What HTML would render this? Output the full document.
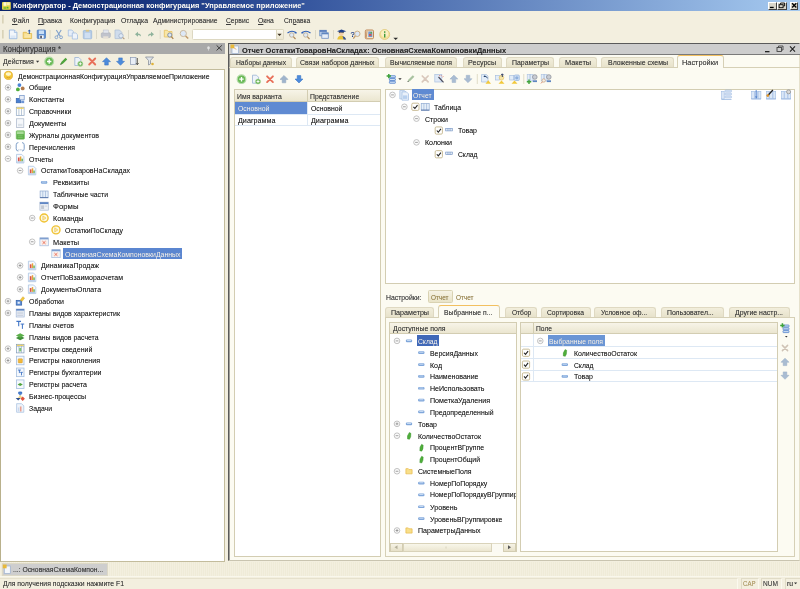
<!DOCTYPE html><html><head><meta charset="utf-8"><title>Конфигуратор</title>
<style>
*{margin:0;padding:0;box-sizing:border-box}
html,body{width:800px;height:589px;overflow:hidden;background:#f3efdf;font-family:"Liberation Sans",sans-serif;font-size:8px;color:#1c1c1c}
.a{position:absolute}
.t{position:absolute;white-space:nowrap;line-height:10px;height:10px;transform-origin:0 50%;text-shadow:0 0 .5px rgba(40,40,40,.45)}
#title{left:0;top:0;width:800px;height:11px;background:linear-gradient(90deg,#0a246a 0%,#14307a 15%,#30509a 35%,#a6caf0 100%)}
svg{position:absolute;left:0;top:0}
#root{position:absolute;left:0;top:0;width:800px;height:589px;will-change:transform}
</style></head><body><div id="root">
<div class="a" id="title"></div>
<div class="t " style="left: 13.1px; top: 1.4px; color: rgb(255, 255, 255); font-weight: bold; font-size: 7.8px; transform: scaleX(0.954);">Конфигуратор - Демонстрационная конфигурация "Управляемое приложение"</div>
<div class="a" style="left:768.1px;top:1.5px;width:9px;height:8px;background:#d9d5c9;border:1px solid;border-color:#fff #404040 #404040 #fff"></div>
<div class="a" style="left:777.1px;top:1.5px;width:10px;height:8px;background:#d9d5c9;border:1px solid;border-color:#fff #404040 #404040 #fff"></div>
<div class="a" style="left:789.9px;top:1.5px;width:8.6px;height:8px;background:#d9d5c9;border:1px solid;border-color:#fff #404040 #404040 #fff"></div>
<div class="t " style="left: 11.5px; top: 15.5px; color: rgb(58, 58, 58); transform: scaleX(0.889);"><u>Ф</u>айл</div>
<div class="t " style="left: 38px; top: 15.5px; color: rgb(58, 58, 58); transform: scaleX(0.888);"><u>П</u>равка</div>
<div class="t " style="left: 69.5px; top: 15.5px; color: rgb(58, 58, 58); transform: scaleX(0.847);">Конфигурация</div>
<div class="t " style="left: 120.7px; top: 15.5px; color: rgb(58, 58, 58); transform: scaleX(0.854);">Отладка</div>
<div class="t " style="left: 153px; top: 15.5px; color: rgb(58, 58, 58); transform: scaleX(0.845);">Администрирование</div>
<div class="t " style="left: 225.7px; top: 15.5px; color: rgb(58, 58, 58); transform: scaleX(0.839);"><u>С</u>ервис</div>
<div class="t " style="left: 258px; top: 15.5px; color: rgb(58, 58, 58); transform: scaleX(0.844);"><u>О</u>кна</div>
<div class="t " style="left: 283.7px; top: 15.5px; color: rgb(58, 58, 58); transform: scaleX(0.838);">Сп<u>р</u>авка</div>
<div class="a" style="left:191.5px;top:29px;width:92.5px;height:10.8px;background:#fff;border:1px solid #ddd8c2;border-radius:1.500px"></div>
<div class="a" style="left:275.5px;top:29px;width:8.5px;height:10.8px;background:linear-gradient(#faf8ee,#ebe6d0);border:1px solid #ddd8c2;border-radius:0 1.500px 1.500px 0"></div>
<div class="a" style="left:0px;top:43px;width:225px;height:10.9px;background:#a9a9a9"></div>
<div class="t " style="left: 3px; top: 44.5px; color: rgb(60, 60, 60); font-size: 8.2px; transform: scaleX(0.96);">Конфигурация *</div>
<div class="t " style="left: 3px; top: 57.4px; color: rgb(58, 58, 58); transform: scaleX(0.876);">Действия</div>
<div class="a" style="left:0px;top:69px;width:225px;height:492.5px;background:#fff;border:1px solid #c3bc9c;border-left:1.300px solid #b9b18c"></div>
<div class="t " style="left: 17.5px; top: 71.5px; transform: scaleX(0.861);">ДемонстрационнаяКонфигурацияУправляемоеПриложение</div>
<div class="t " style="left: 29px; top: 83.37px; transform: scaleX(0.855);">Общие</div>
<div class="t " style="left: 29px; top: 95.24px; transform: scaleX(0.901);">Константы</div>
<div class="t " style="left: 29px; top: 107.11px; transform: scaleX(0.877);">Справочники</div>
<div class="t " style="left: 29px; top: 118.98px; transform: scaleX(0.909);">Документы</div>
<div class="t " style="left: 29px; top: 130.85px; transform: scaleX(0.87);">Журналы документов</div>
<div class="t " style="left: 29px; top: 142.72px; transform: scaleX(0.855);">Перечисления</div>
<div class="t " style="left: 29px; top: 154.59px; transform: scaleX(0.868);">Отчеты</div>
<div class="t " style="left: 40.9px; top: 166.46px; transform: scaleX(0.873);">ОстаткиТоваровНаСкладах</div>
<div class="t " style="left: 52.9px; top: 178.33px; transform: scaleX(0.918);">Реквизиты</div>
<div class="t " style="left: 52.9px; top: 190.2px; transform: scaleX(0.858);">Табличные части</div>
<div class="t " style="left: 52.9px; top: 202.07px; transform: scaleX(0.972);">Формы</div>
<div class="t " style="left: 52.9px; top: 213.94px; transform: scaleX(0.9);">Команды</div>
<div class="t " style="left: 64.7px; top: 225.81px; transform: scaleX(0.865);">ОстаткиПоСкладу</div>
<div class="t " style="left: 52.9px; top: 237.68px; transform: scaleX(0.916);">Макеты</div>
<div class="a" style="left:63.2px;top:248.14999999999998px;width:119.0px;height:11px;background:#5b86d0"></div>
<div class="t " style="left: 64.7px; top: 249.55px; color: rgb(255, 255, 255); transform: scaleX(0.865);">ОсновнаяСхемаКомпоновкиДанных</div>
<div class="t " style="left: 40.9px; top: 261.42px; transform: scaleX(0.882);">ДинамикаПродаж</div>
<div class="t " style="left: 40.9px; top: 273.29px; transform: scaleX(0.866);">ОтчетПоВзаиморасчетам</div>
<div class="t " style="left: 40.9px; top: 285.16px; transform: scaleX(0.873);">ДокументыОплата</div>
<div class="t " style="left: 29px; top: 297.03px; transform: scaleX(0.871);">Обработки</div>
<div class="t " style="left: 29px; top: 308.9px; transform: scaleX(0.867);">Планы видов характеристик</div>
<div class="t " style="left: 29px; top: 320.77px; transform: scaleX(0.869);">Планы счетов</div>
<div class="t " style="left: 29px; top: 332.64px; transform: scaleX(0.861);">Планы видов расчета</div>
<div class="t " style="left: 29px; top: 344.51px; transform: scaleX(0.884);">Регистры сведений</div>
<div class="t " style="left: 29px; top: 356.38px; transform: scaleX(0.882);">Регистры накопления</div>
<div class="t " style="left: 29px; top: 368.25px; transform: scaleX(0.878);">Регистры бухгалтерии</div>
<div class="t " style="left: 29px; top: 380.12px; transform: scaleX(0.878);">Регистры расчета</div>
<div class="t " style="left: 29px; top: 391.99px; transform: scaleX(0.879);">Бизнес-процессы</div>
<div class="t " style="left: 29px; top: 403.86px; transform: scaleX(0.856);">Задачи</div>
<div class="a" style="left:0px;top:562px;width:800px;height:14.5px;background:repeating-linear-gradient(90deg,#f3efdf 0,#f3efdf 1px,#efebd8 1px,#efebd8 2px)"></div>
<div class="a" style="left:0px;top:576.3px;width:800px;height:1px;background:#f9f7ec"></div>
<div class="a" style="left:1.5px;top:563px;width:106.5px;height:12.5px;background:#cecece;border:1px solid #dcd8c6"></div>
<div class="t " style="left: 13.1px; top: 565px; color: rgb(58, 58, 58); transform: scaleX(0.849);">...: ОсновнаяСхемаКомпон...</div>
<div class="t " style="left: 3.2px; top: 578.9px; color: rgb(58, 58, 58); transform: scaleX(0.859);">Для получения подсказки нажмите F1</div>
<div class="a" style="left:740.5px;top:577.5px;width:18px;height:12px;border:1px solid #e0dbc6;border-right-color:#fbf9ef;border-bottom-color:#fbf9ef"></div>
<div class="a" style="left:761px;top:577.5px;width:20.5px;height:12px;border:1px solid #e0dbc6;border-right-color:#fbf9ef;border-bottom-color:#fbf9ef"></div>
<div class="a" style="left:785px;top:577.5px;width:16px;height:12px;border:1px solid #e0dbc6;border-right-color:#fbf9ef;border-bottom-color:#fbf9ef"></div>
<div class="a" style="left:0px;top:577.5px;width:737.5px;height:12px;border:1px solid #e6e1cd;border-left:none;border-right-color:#fbf9ef;border-bottom-color:#fbf9ef"></div>
<div class="t " style="left: 743px; top: 578.6px; color: rgb(192, 168, 106); transform: scaleX(0.76);">CAP</div>
<div class="t " style="left: 763.3px; top: 578.6px; color: rgb(74, 74, 74); transform: scaleX(0.823);">NUM</div>
<div class="t " style="left: 786.5px; top: 578.6px; color: rgb(51, 51, 51); transform: scaleX(0.842);">ru</div>
<div class="a" style="left:228px;top:43px;width:571.5px;height:518px;background:#fcfbf2;border:1px solid #5a5a5a;border-right:1px solid #e6e1cc;border-bottom:1.500px solid #c9c4b0"></div>
<div class="a" style="left:229px;top:44px;width:571px;height:11px;background:#cdcdcd;border-bottom:1px solid #7a7a7a"></div>
<div class="a" style="left:229px;top:55px;width:1px;height:505px;background:#a09f98"></div>
<div class="t " style="left: 241.8px; top: 45.5px; color: rgb(43, 43, 43); font-weight: bold; font-size: 8px; transform: scaleX(0.934);">Отчет ОстаткиТоваровНаСкладах: ОсновнаяСхемаКомпоновкиДанных</div>
<div class="a" style="left:229px;top:66.5px;width:571px;height:1px;background:#d6d0b6"></div>
<div class="a" style="left:229.5px;top:56.5px;width:62.0px;height:10.0px;background:linear-gradient(#f2eedc,#e7e2cb);border:1px solid #dfd9c2;border-bottom:none;border-radius:3px 3px 0 0"></div>
<div class="t " style="left: 235.5px; top: 57.65px; color: rgb(58, 58, 58); transform: scaleX(0.842);">Наборы данных</div>
<div class="a" style="left:295.7px;top:56.5px;width:83.30000000000001px;height:10.0px;background:linear-gradient(#f2eedc,#e7e2cb);border:1px solid #dfd9c2;border-bottom:none;border-radius:3px 3px 0 0"></div>
<div class="t " style="left: 300.1px; top: 57.65px; color: rgb(58, 58, 58); transform: scaleX(0.87);">Связи наборов данных</div>
<div class="a" style="left:384.5px;top:56.5px;width:72.5px;height:10.0px;background:linear-gradient(#f2eedc,#e7e2cb);border:1px solid #dfd9c2;border-bottom:none;border-radius:3px 3px 0 0"></div>
<div class="t " style="left: 389.75px; top: 57.65px; color: rgb(58, 58, 58); transform: scaleX(0.853);">Вычисляемые поля</div>
<div class="a" style="left:462.5px;top:56.5px;width:39.5px;height:10.0px;background:linear-gradient(#f2eedc,#e7e2cb);border:1px solid #dfd9c2;border-bottom:none;border-radius:3px 3px 0 0"></div>
<div class="t " style="left: 468.25px; top: 57.65px; color: rgb(58, 58, 58); transform: scaleX(0.888);">Ресурсы</div>
<div class="a" style="left:506px;top:56.5px;width:48px;height:10.0px;background:linear-gradient(#f2eedc,#e7e2cb);border:1px solid #dfd9c2;border-bottom:none;border-radius:3px 3px 0 0"></div>
<div class="t " style="left: 511.5px; top: 57.65px; color: rgb(58, 58, 58); transform: scaleX(0.867);">Параметры</div>
<div class="a" style="left:559px;top:56.5px;width:37.5px;height:10.0px;background:linear-gradient(#f2eedc,#e7e2cb);border:1px solid #dfd9c2;border-bottom:none;border-radius:3px 3px 0 0"></div>
<div class="t " style="left: 564.75px; top: 57.65px; color: rgb(58, 58, 58); transform: scaleX(0.916);">Макеты</div>
<div class="a" style="left:601px;top:56.5px;width:73px;height:10.0px;background:linear-gradient(#f2eedc,#e7e2cb);border:1px solid #dfd9c2;border-bottom:none;border-radius:3px 3px 0 0"></div>
<div class="t " style="left: 607.5px; top: 57.65px; color: rgb(58, 58, 58); transform: scaleX(0.868);">Вложенные схемы</div>
<div class="a" style="left:676.5px;top:54.7px;width:47.5px;height:13.0px;background:#fcfbf3;border:1px solid #d6d0b6;border-bottom:none;border-top:1.500px solid #f2c060;border-radius:3px 3px 0 0"></div>
<div class="t " style="left: 682.25px; top: 57.65px; color: rgb(58, 58, 58); transform: scaleX(0.918);">Настройки</div>
<div class="a" style="left:234px;top:89px;width:147px;height:467.5px;background:#fff;border:1px solid #d3cdb2"></div>
<div class="a" style="left:235px;top:90px;width:145px;height:12px;background:linear-gradient(#f7f4e8,#ebe6d0);border-bottom:1px solid #d3cdb2"></div>
<div class="a" style="left:307px;top:90px;width:1px;height:12px;background:#d3cdb2"></div>
<div class="t " style="left: 237.3px; top: 91.5px; color: rgb(58, 58, 58); transform: scaleX(0.856);">Имя варианта</div>
<div class="t " style="left: 310.4px; top: 91.5px; color: rgb(58, 58, 58); transform: scaleX(0.853);">Представление</div>
<div class="a" style="left:235px;top:102px;width:72px;height:11.5px;background:#5f8ad2"></div>
<div class="t " style="left: 237.6px; top: 104.1px; color: rgb(255, 255, 255); transform: scaleX(0.856);">Основной</div>
<div class="t " style="left: 310.6px; top: 104.1px; transform: scaleX(0.856);">Основной</div>
<div class="t " style="left: 237.6px; top: 116.2px; transform: scaleX(0.899);">Диаграмма</div>
<div class="t " style="left: 310.6px; top: 116.2px; transform: scaleX(0.899);">Диаграмма</div>
<div class="a" style="left:235px;top:113.5px;width:145px;height:1px;background:#dde8f4"></div>
<div class="a" style="left:235px;top:125px;width:145px;height:1px;background:#dde8f4"></div>
<div class="a" style="left:307px;top:102px;width:1px;height:23.5px;background:#dde8f4"></div>
<div class="a" style="left:385px;top:88.5px;width:410px;height:195.5px;background:#fff;border:1px solid #d3cdb2"></div>
<div class="a" style="left:411.5px;top:89.4px;width:22px;height:11px;background:#5f8ad2"></div>
<div class="t " style="left: 413.3px; top: 90.8px; color: rgb(255, 255, 255); transform: scaleX(0.845);">Отчет</div>
<div class="t " style="left: 434.3px; top: 102.67px; transform: scaleX(0.861);">Таблица</div>
<div class="t " style="left: 425px; top: 114.54px; transform: scaleX(0.874);">Строки</div>
<div class="t " style="left: 458px; top: 126.41px; transform: scaleX(0.872);">Товар</div>
<div class="t " style="left: 425px; top: 138.28px; transform: scaleX(0.884);">Колонки</div>
<div class="t " style="left: 458px; top: 150.15px; transform: scaleX(0.842);">Склад</div>
<div class="t " style="left: 385.5px; top: 292.6px; color: rgb(58, 58, 58); transform: scaleX(0.856);">Настройки:</div>
<div class="a" style="left:428px;top:290px;width:24.5px;height:13px;background:linear-gradient(#f6f3e4,#e9e3c8);border:1px solid #d9d2b2;border-radius:1.500px"></div>
<div class="t " style="left: 431.2px; top: 292.6px; color: rgb(168, 144, 80); transform: scaleX(0.799);">Отчет</div>
<div class="t " style="left: 455.5px; top: 292.6px; color: rgb(168, 144, 80); transform: scaleX(0.799);">Отчет</div>
<div class="a" style="left:385px;top:316.5px;width:410px;height:240px;background:#fcfbf2;border:1px solid #d6d0b6"></div>
<div class="a" style="left:385px;top:306.5px;width:48.60000000000002px;height:10.0px;background:linear-gradient(#f2eedc,#e7e2cb);border:1px solid #dfd9c2;border-bottom:none;border-radius:3px 3px 0 0"></div>
<div class="t " style="left: 391px; top: 307.65px; color: rgb(58, 58, 58); transform: scaleX(0.891);">Параметры</div>
<div class="a" style="left:438.3px;top:304.7px;width:62.19999999999999px;height:13.0px;background:#fcfbf3;border:1px solid #d6d0b6;border-bottom:none;border-top:1.500px solid #f2c060;border-radius:3px 3px 0 0"></div>
<div class="t " style="left: 443.8px; top: 307.65px; color: rgb(58, 58, 58); transform: scaleX(0.852);">Выбранные п...</div>
<div class="a" style="left:505px;top:306.5px;width:31.799999999999955px;height:10.0px;background:linear-gradient(#f2eedc,#e7e2cb);border:1px solid #dfd9c2;border-bottom:none;border-radius:3px 3px 0 0"></div>
<div class="t " style="left: 511.5px; top: 307.65px; color: rgb(58, 58, 58); transform: scaleX(0.821);">Отбор</div>
<div class="a" style="left:541px;top:306.5px;width:49.5px;height:10.0px;background:linear-gradient(#f2eedc,#e7e2cb);border:1px solid #dfd9c2;border-bottom:none;border-radius:3px 3px 0 0"></div>
<div class="t " style="left: 547px; top: 307.65px; color: rgb(58, 58, 58); transform: scaleX(0.843);">Сортировка</div>
<div class="a" style="left:594.3px;top:306.5px;width:62.200000000000045px;height:10.0px;background:linear-gradient(#f2eedc,#e7e2cb);border:1px solid #dfd9c2;border-bottom:none;border-radius:3px 3px 0 0"></div>
<div class="t " style="left: 601.3px; top: 307.65px; color: rgb(58, 58, 58); transform: scaleX(0.836);">Условное оф...</div>
<div class="a" style="left:661px;top:306.5px;width:62.60000000000002px;height:10.0px;background:linear-gradient(#f2eedc,#e7e2cb);border:1px solid #dfd9c2;border-bottom:none;border-radius:3px 3px 0 0"></div>
<div class="t " style="left: 667px; top: 307.65px; color: rgb(58, 58, 58); transform: scaleX(0.858);">Пользовател...</div>
<div class="a" style="left:728.5px;top:306.5px;width:61.89999999999998px;height:10.0px;background:linear-gradient(#f2eedc,#e7e2cb);border:1px solid #dfd9c2;border-bottom:none;border-radius:3px 3px 0 0"></div>
<div class="t " style="left: 734.5px; top: 307.65px; color: rgb(58, 58, 58); transform: scaleX(0.865);">Другие настр...</div>
<div class="a" style="left:388.5px;top:321.5px;width:128.5px;height:230.5px;background:#fff;border:1px solid #d3cdb2"></div>
<div class="a" style="left:389.5px;top:322.5px;width:126.5px;height:11.5px;background:linear-gradient(#f7f4e8,#ebe6d0);border-bottom:1px solid #d3cdb2"></div>
<div class="t " style="left: 393px; top: 324.2px; color: rgb(58, 58, 58); transform: scaleX(0.868);">Доступные поля</div>
<div class="a" style="left:416.5px;top:335.09999999999997px;width:22.5px;height:11px;background:#4068b8"></div>
<div class="t " style="left: 417.8px; top: 336.8px; color: rgb(255, 255, 255); transform: scaleX(0.842);">Склад</div>
<div class="t " style="left: 429.5px; top: 348.65px; transform: scaleX(0.865);">ВерсияДанных</div>
<div class="t " style="left: 429.5px; top: 360.5px; transform: scaleX(0.882);">Код</div>
<div class="t " style="left: 429.5px; top: 372.35px; transform: scaleX(0.874);">Наименование</div>
<div class="t " style="left: 429.5px; top: 384.2px; transform: scaleX(0.883);">НеИспользовать</div>
<div class="t " style="left: 429.5px; top: 396.05px; transform: scaleX(0.888);">ПометкаУдаления</div>
<div class="t " style="left: 429.5px; top: 407.9px; transform: scaleX(0.862);">Предопределенный</div>
<div class="t " style="left: 417.8px; top: 419.75px; transform: scaleX(0.872);">Товар</div>
<div class="t " style="left: 417.8px; top: 431.6px; transform: scaleX(0.868);">КоличествоОстаток</div>
<div class="t " style="left: 429.5px; top: 443.45px; transform: scaleX(0.866);">ПроцентВГруппе</div>
<div class="t " style="left: 429.5px; top: 455.3px; transform: scaleX(0.862);">ПроцентОбщий</div>
<div class="t " style="left: 417.8px; top: 467.15px; transform: scaleX(0.871);">СистемныеПоля</div>
<div class="t " style="left: 429.5px; top: 479px; transform: scaleX(0.868);">НомерПоПорядку</div>
<div class="a" style="left:429.5px;top:489.94999999999993px;width:86.5px;height:10px;overflow:hidden"><div class="t" style="left: 0px; top: 0px; transform: scaleX(0.865);">НомерПоПорядкуВГруппиров</div></div>
<div class="t " style="left: 429.5px; top: 502.7px; transform: scaleX(0.892);">Уровень</div>
<div class="t " style="left: 429.5px; top: 514.55px; transform: scaleX(0.876);">УровеньВГруппировке</div>
<div class="t " style="left: 417.8px; top: 526.4px; transform: scaleX(0.879);">ПараметрыДанных</div>
<div class="a" style="left:389.5px;top:543px;width:126.5px;height:8.5px;background:#f3f0e2;border-top:1px solid #e2ddc8"></div>
<div class="a" style="left:389.5px;top:543px;width:13px;height:8.5px;background:linear-gradient(#f6f3e6,#e6e0c8);border:1px solid #d3cdb2"></div>
<div class="a" style="left:503px;top:543px;width:13px;height:8.5px;background:linear-gradient(#f6f3e6,#e6e0c8);border:1px solid #d3cdb2"></div>
<div class="a" style="left:402.5px;top:543px;width:89.5px;height:8.5px;background:linear-gradient(#f8f6ea,#ebe6d0);border:1px solid #d9d3ba"></div>
<div class="a" style="left:492px;top:543.5px;width:11px;height:8px;background:#fbfaf3"></div>
<div class="a" style="left:519.5px;top:321.5px;width:258.5px;height:230.5px;background:#fff;border:1px solid #d3cdb2"></div>
<div class="a" style="left:520.5px;top:322.5px;width:256.5px;height:11.5px;background:linear-gradient(#f7f4e8,#ebe6d0);border-bottom:1px solid #d3cdb2"></div>
<div class="a" style="left:532.5px;top:322.5px;width:1px;height:11.5px;background:#d3cdb2"></div>
<div class="t " style="left: 536.3px; top: 324.2px; color: rgb(58, 58, 58); transform: scaleX(0.836);">Поле</div>
<div class="a" style="left:520.5px;top:345.85px;width:256.5px;height:1px;background:#dde8f4"></div>
<div class="a" style="left:520.5px;top:357.7px;width:256.5px;height:1px;background:#dde8f4"></div>
<div class="a" style="left:520.5px;top:369.55px;width:256.5px;height:1px;background:#dde8f4"></div>
<div class="a" style="left:520.5px;top:381.4px;width:256.5px;height:1px;background:#dde8f4"></div>
<div class="a" style="left:532.5px;top:334px;width:1px;height:47.4px;background:#dde8f4"></div>
<div class="a" style="left:548px;top:334.9px;width:56.5px;height:10.8px;background:#6a95d5"></div>
<div class="t " style="left: 549.3px; top: 336.8px; color: rgb(255, 255, 255); transform: scaleX(0.851);">Выбранные поля</div>
<div class="t " style="left: 574px; top: 348.65px; transform: scaleX(0.868);">КоличествоОстаток</div>
<div class="t " style="left: 574px; top: 360.5px; transform: scaleX(0.842);">Склад</div>
<div class="t " style="left: 574px; top: 372.35px; transform: scaleX(0.872);">Товар</div>
<svg width="800" height="589" viewBox="0 0 800 589">
<rect x="2" y="2" width="8.800" height="7.800" rx=".8" fill="#e3d44a"></rect><rect x="3.500" y="2.300" width="3" height="3.500" fill="#fbf8d8"></rect><rect x="7" y="2.300" width="2.800" height="3" fill="#f7efb0"></rect><rect x="3" y="6.800" width="6" height="2.500" fill="#b9cf3a"></rect><circle cx="5" cy="8" r=".8" fill="#4fae3a"></circle><circle cx="7.500" cy="7.600" r=".8" fill="#4fae3a"></circle>
<rect x="769.9" y="6.800" width="3.800" height="1.300" fill="#000"></rect>
<rect x="779.1" y="4.700" width="4" height="3" fill="none" stroke="#000" stroke-width=".9"></rect><path d="M780.6 4.200 v-1.200 h4 v3 h-1.200" fill="none" stroke="#000" stroke-width=".9"></path>
<path d="M792.1 3.300 l4.200 4.200 M796.3 3.300 l-4.200 4.200" stroke="#000" stroke-width="1.300"></path>
<rect x="2" y="15" width="1.700" height="8.500" fill="#d9d3b8"></rect>
<rect x="2" y="30" width="1.700" height="8.500" fill="#d9d3b8"></rect>
<rect x="49.6" y="30" width="1" height="9" fill="#dcd8c6"></rect>
<rect x="96.0" y="30" width="1" height="9" fill="#dcd8c6"></rect>
<rect x="128.0" y="30" width="1" height="9" fill="#dcd8c6"></rect>
<rect x="159.7" y="30" width="1" height="9" fill="#dcd8c6"></rect>
<rect x="315.0" y="30" width="1" height="9" fill="#dcd8c6"></rect>
<rect x="333.0" y="30" width="1" height="9" fill="#dcd8c6"></rect>
<path d="M9.400 30 h5 l2.500 2.500 v6.200 h-7.500 z" fill="#f2f6fb" stroke="#8fb0dc" stroke-width=".8"></path><path d="M14.400 30 v2.500 h2.500" fill="#dbe7f5" stroke="#8fb0dc" stroke-width=".6"></path><rect x="10.500" y="35.500" width="5" height="2.500" fill="#d5e3f5" opacity=".8"></rect>
<path d="M23.200 32.300 h3.200 l1 1.200 h4.200 v5 h-8.400 z" fill="#f7dc8a" stroke="#e0b848" stroke-width=".8"></path><path d="M24.500 35 h6 M24.500 36.800 h6" stroke="#fbeebc" stroke-width=".9"></path><path d="M29.300 34 v-3.200" stroke="#2f5fb0" stroke-width="1"></path><path d="M27.800 31.300 l1.500 -1.800 l1.500 1.800 z" fill="#2f5fb0"></path>
<rect x="37.200" y="30" width="8.300" height="8.500" rx=".8" fill="#5f8fd0" stroke="#4a78bd" stroke-width=".7"></rect><rect x="38.800" y="30.400" width="5.200" height="3.600" fill="#c9def5"></rect><rect x="39.300" y="35.300" width="4.400" height="3.200" fill="#f4f7fb"></rect><rect x="40.300" y="35.800" width="1.500" height="2.500" fill="#3a3a4a"></rect>
<path d="M56.300 30 l3.900 6.300 M61.200 30 l-3.900 6.300" stroke="#7fa0cc" stroke-width="1.100" fill="none"></path><circle cx="56.400" cy="37.300" r="1.400" fill="none" stroke="#7fa0cc" stroke-width=".9"></circle><circle cx="61.100" cy="37.300" r="1.400" fill="none" stroke="#7fa0cc" stroke-width=".9"></circle>
<path d="M68.300 30 h3.500 l1.500 1.500 v4.500 h-5 z" fill="#e6eef8" stroke="#a4bedf" stroke-width=".8"></path><path d="M72.300 33 h3.500 l1.700 1.700 v4.300 h-5.200 z" fill="#eef3fa" stroke="#a4bedf" stroke-width=".8"></path>
<rect x="83.300" y="30.500" width="8.400" height="8.300" rx=".8" fill="#b4cbe6" stroke="#9ab6d9" stroke-width=".7"></rect><rect x="85.800" y="29.800" width="3.400" height="1.800" fill="#d9c68a"></rect><rect x="84.800" y="32.800" width="5.500" height="5.300" fill="#cfdff2"></rect>
<rect x="101.300" y="32.800" width="9" height="4.800" rx="1" fill="#c0c3cc" stroke="#aeb2bd" stroke-width=".7"></rect><rect x="103.200" y="30" width="5.200" height="3" fill="#e2e6ee" stroke="#b9bdc8" stroke-width=".5"></rect><rect x="103.200" y="36.300" width="5.200" height="2.500" fill="#e6e0d6"></rect>
<path d="M115 30 h4.500 l2.300 2.300 v6.300 h-6.800 z" fill="#cfdcec" stroke="#a9bbd3" stroke-width=".7"></path><circle cx="121" cy="35.800" r="2.200" fill="#dfe9f5" stroke="#9fb0c8" stroke-width=".8"></circle><path d="M122.600 37.400 l1.800 1.800" stroke="#b09a80" stroke-width="1.100"></path>
<path d="M135 34.300 l3 -2.600 v1.700 q3 0 3 3.200 q-.8 -1.600 -3 -1.600 v1.800 z" fill="#8fb39c"></path>
<path d="M154 34.300 l-3 -2.600 v1.700 q-3 0 -3 3.200 q.8 -1.600 3 -1.600 v1.800 z" fill="#8fb39c"></path>
<path d="M164.300 30.300 h3 l1 1.200 h3.700 v5.500 h-7.700 z" fill="#f9e6a6" stroke="#e6c060" stroke-width=".8"></path><circle cx="169.800" cy="35" r="2.100" fill="#dbe6f5" stroke="#6f7f99" stroke-width=".8"></circle><path d="M171.300 36.600 l2 2.200" stroke="#a8804a" stroke-width="1.200"></path>
<circle cx="183.300" cy="33.500" r="3.100" fill="#dde8f6" stroke="#c9b9a0" stroke-width="1"></circle><path d="M185.600 35.900 l2.600 2.700" stroke="#c09a6a" stroke-width="1.500"></path>
<path d="M277.300 33.800 h4.400 l-2.200 2.300 z" fill="#3a3020"></path>
<circle cx="291.7" cy="35" r="2.200" fill="#dde8f6" stroke="#b9a890" stroke-width=".8"></circle><path d="M293.3 36.700 l2.200 2.300" stroke="#b08a5a" stroke-width="1.200"></path><path d="M287.5 33 q4.500 -3.600 9 0" fill="none" stroke="#2f5fb8" stroke-width="1.100"></path><path d="M296.5 33.600 l-2.2 -.3 l1.5 -1.800 z" fill="#2f5fb8"></path>
<circle cx="305.7" cy="35" r="2.200" fill="#dde8f6" stroke="#b9a890" stroke-width=".8"></circle><path d="M307.3 36.700 l2.200 2.300" stroke="#b08a5a" stroke-width="1.200"></path><path d="M301.5 33 q4.500 -3.600 9 0" fill="none" stroke="#2f5fb8" stroke-width="1.100"></path><path d="M301.5 33.600 l2.2 -.3 l-1.5 -1.800 z" fill="#2f5fb8"></path>
<rect x="319.800" y="30.300" width="6.500" height="5.500" fill="#c9daf0" stroke="#5f86c0" stroke-width=".8"></rect><rect x="319.800" y="30.300" width="6.500" height="1.500" fill="#4f76b8"></rect><rect x="321.800" y="32.800" width="6.500" height="5.500" fill="#e6eef8" stroke="#6f90c4" stroke-width=".8"></rect><rect x="321.800" y="32.800" width="6.500" height="1.500" fill="#5f86c0"></rect>
<circle cx="341.300" cy="33.800" r="2.300" fill="#f3cfa6"></circle><path d="M338.500 33.300 q.3 -2 2.800 -2 q2.500 0 2.800 2 q-1.500 -1 -2.800 -1 q-1.300 0 -2.800 1z" fill="#222"></path><path d="M337 31.300 l4.500 -1.800 l4.800 1.800 l-4.700 1.300 z" fill="#1f3f8a"></path><path d="M337.300 39.500 q.2 -3.800 3.800 -3.800 q3.800 0 4.800 3.800 z" fill="#e8c33a"></path><path d="M342.500 36 q2.800 .5 3.700 3.500 h-2.500 z" fill="#2f4f9a"></path>
<text x="350.300" y="36.500" font-size="8" font-family="Liberation Sans" font-weight="bold" fill="#1f3f8a">?</text><circle cx="357.300" cy="33.800" r="2.700" fill="#dde8f6" stroke="#c9a87a" stroke-width=".9"></circle><path d="M355.300 35.800 l-2 2.800" stroke="#c09a6a" stroke-width="1.300"></path>
<rect x="365.300" y="30" width="8.200" height="8.800" rx="1.200" fill="#f3e3c6" stroke="#b87a4a" stroke-width=".9"></rect><rect x="368.300" y="31.500" width="4" height="5.500" fill="#6f97d3"></rect><rect x="369" y="34" width="2.500" height="1.800" fill="#d9534a"></rect><rect x="370.500" y="32" width="1.500" height="1.500" fill="#5cab45"></rect><path d="M367 31 l-.8 7" stroke="#b87a4a" stroke-width=".7"></path>
<circle cx="384.700" cy="34.500" r="5" fill="#f3e09a" stroke="#e0c878" stroke-width=".8"></circle><circle cx="384.700" cy="33.500" r="3.600" fill="#fbf3cc" opacity=".8"></circle><rect x="384" y="33.800" width="1.400" height="3.700" fill="#3f9a3a"></rect><rect x="384" y="31.300" width="1.400" height="1.500" fill="#3f9a3a"></rect>
<path d="M393.400 37.800 h4.600 l-2.300 2.200 z" fill="#2a2a2a"></path>
<ellipse cx="208.500" cy="47.800" rx="1.300" ry="1.500" fill="#e3e3e3"></ellipse><path d="M208.500 49 v1.600" stroke="#dcdcdc" stroke-width=".8"></path>
<path d="M216.600 45.400 l5.200 5 M221.800 45.400 l-5.200 5" stroke="#3a3a3a" stroke-width="1"></path>
<path d="M36 60.800 h3.200 l-1.600 1.900 z" fill="#333"></path>
<circle cx="49.2" cy="61.5" r="4.4" fill="#69b955" stroke="#b3dba8" stroke-width="1.200"></circle><path d="M47.0 61.5 h4.400 M49.2 59.3 v4.400" stroke="#fff" stroke-width="1.300"></path>
<path d="M60.3 64.7 l1 -2.600 l4.300 -4.300 l1.600 1.600 l-4.300 4.300 z" fill="#4fa43c"></path><path d="M60.3 64.7 l.5 -1.400 l.9 .9 z" fill="#333"></path>
<path d="M74.8 57.5 h4 l2 2 v6 h-6 z" fill="#eef3fa" stroke="#9ab3d3" stroke-width=".8"></path><circle cx="80.3" cy="63.8" r="2.600" fill="#63b04c" stroke="#b8dcae" stroke-width=".6"></circle><path d="M78.8 63.8 h3 M80.3 62.3 v3" stroke="#fff" stroke-width=".9"></path>
<path d="M89.2 58.5 l6 6 M95.2 58.5 l-6 6" stroke="#e8705a" stroke-width="1.9" stroke-linecap="round"></path>
<path d="M106.5 57.7 l4 4 h-2.200 v3.400 h-3.600 v-3.400 h-2.200 z" fill="#4d8bdb" stroke="#2e6cc0" stroke-width=".5"></path>
<path d="M120.5 65.3 l4 -4 h-2.200 v-3.400 h-3.600 v3.400 h-2.200 z" fill="#4d8bdb" stroke="#2e6cc0" stroke-width=".5"></path>
<rect x="130.500" y="57.5" width="5.500" height="7" fill="#e9eef6" stroke="#8a9bb5" stroke-width=".7"></rect><path d="M137.300 58 v6.500 m-1.300 -1.400 l1.300 1.600 l1.300 -1.600" stroke="#333" stroke-width=".8" fill="none"></path>
<path d="M145.500 57 h8 l-3 3.500 v3.500 l-2 1 v-4.500 z" fill="#dfe4ea" stroke="#7e8794" stroke-width=".7"></path><circle cx="152.500" cy="64" r="1.300" fill="#e0b23a"></circle>
<circle cx="8.4" cy="75.39999999999999" r="4.100" fill="#f5c93a" stroke="#e0a828" stroke-width=".7"></circle><ellipse cx="8.4" cy="74.1" rx="2.800" ry="1.800" fill="#fef6c8"></ellipse><path d="M6.4 77.1 q2 1.500 4 0" stroke="#c98a1e" stroke-width=".6" fill="none"></path>
<circle cx="8" cy="87.47" r="2.800" fill="#fbfbfb" stroke="#b4b4b4" stroke-width=".8"></circle><path d="M6.6 87.47 h2.800 M8 86.07 v2.800" stroke="#8a8a8a" stroke-width=".8"></path>
<circle cx="17.9" cy="89.47" r="1.900" fill="#4fae3a"></circle><circle cx="22.7" cy="88.47" r="1.900" fill="#b07a4a"></circle><circle cx="19.4" cy="85.07" r="1.900" fill="#4a84d6"></circle>
<circle cx="8" cy="99.33999999999999" r="2.800" fill="#fbfbfb" stroke="#b4b4b4" stroke-width=".8"></circle><path d="M6.6 99.33999999999999 h2.800 M8 97.93999999999998 v2.800" stroke="#8a8a8a" stroke-width=".8"></path>
<rect x="16.2" y="98.33999999999999" width="4.500" height="4.500" fill="#4a7fd0" stroke="#2e5ea8" stroke-width=".6"></rect><rect x="19.7" y="95.33999999999999" width="4.500" height="4.500" fill="#e9eef6" stroke="#6d8fc6" stroke-width=".7"></rect><rect x="21.2" y="100.63999999999999" width="3" height="2.500" fill="#6d95d6"></rect>
<circle cx="8" cy="111.21" r="2.800" fill="#fbfbfb" stroke="#b4b4b4" stroke-width=".8"></circle><path d="M6.6 111.21 h2.800 M8 109.80999999999999 v2.800" stroke="#8a8a8a" stroke-width=".8"></path>
<rect x="16.3" y="107.21" width="7.800" height="8.200" fill="#fdfdfb" stroke="#8fa6c4" stroke-width=".7"></rect><path d="M18.9 107.21 v8.200 M21.5 107.21 v8.200" stroke="#8fa6c4" stroke-width=".6"></path><rect x="16.7" y="107.50999999999999" width="7" height="1.300" fill="#f2d25a"></rect>
<circle cx="8" cy="123.07999999999998" r="2.800" fill="#fbfbfb" stroke="#b4b4b4" stroke-width=".8"></circle><path d="M6.6 123.07999999999998 h2.800 M8 121.67999999999998 v2.800" stroke="#8a8a8a" stroke-width=".8"></path>
<rect x="16.599999999999998" y="118.77999999999999" width="7.200" height="8.600" fill="#f6f8fb" stroke="#a9b6c9" stroke-width=".7"></rect><path d="M18.0 124.37999999999998 h4.400 M18.0 125.67999999999998 h4.400" stroke="#c3ccd9" stroke-width=".6"></path>
<circle cx="8" cy="134.95" r="2.800" fill="#fbfbfb" stroke="#b4b4b4" stroke-width=".8"></circle><path d="M6.6 134.95 h2.800 M8 133.54999999999998 v2.800" stroke="#8a8a8a" stroke-width=".8"></path>
<rect x="16.2" y="130.64999999999998" width="8.300" height="8.600" rx="1" fill="#5fb04a" stroke="#6fba5a" stroke-width=".5"></rect><rect x="16.9" y="131.35" width="6.800" height="2.800" fill="#a9dc98"></rect><path d="M17.7 135.75 h5 M17.7 137.35 h5" stroke="#8fd07c" stroke-width=".6"></path>
<circle cx="8" cy="146.82" r="2.800" fill="#fbfbfb" stroke="#b4b4b4" stroke-width=".8"></circle><path d="M6.6 146.82 h2.800 M8 145.42 v2.800" stroke="#8a8a8a" stroke-width=".8"></path>
<path d="M18.4 142.62 q-2.200 0 -2.200 2.200 v4 q0 2.200 2.200 2.200 M22.0 142.62 q2.200 0 2.200 2.200 v4 q0 2.200 -2.200 2.200" fill="none" stroke="#7f9fc8" stroke-width="1"></path><path d="M18.4 149.82 h.9 M19.9 149.82 h.9 M21.4 149.82 h.9" stroke="#8fa6c4" stroke-width=".8"></path>
<circle cx="8" cy="158.69" r="2.800" fill="#fbfbfb" stroke="#b4b4b4" stroke-width=".8"></circle><path d="M6.6 158.69 h2.800" stroke="#8a8a8a" stroke-width=".8"></path>
<path d="M16.5 154.39 h5.200 l2.200 2.200 v6.400 h-7.400 z" fill="#f7f9fc" stroke="#a4bedf" stroke-width=".7"></path><rect x="17.9" y="157.49" width="1.700" height="3.800" fill="#d9534a"></rect><rect x="19.9" y="156.49" width="1.400" height="4.800" fill="#e8a23a"></rect><rect x="21.5" y="158.69" width="1.300" height="2.600" fill="#5cab45"></rect><path d="M17.2 161.99 h6" stroke="#8fb0dc" stroke-width=".7"></path>
<circle cx="20.1" cy="170.56" r="2.800" fill="#fbfbfb" stroke="#b4b4b4" stroke-width=".8"></circle><path d="M18.700000000000003 170.56 h2.800" stroke="#8a8a8a" stroke-width=".8"></path>
<path d="M28.400000000000002 166.26 h5.200 l2.200 2.200 v6.400 h-7.400 z" fill="#f7f9fc" stroke="#a4bedf" stroke-width=".7"></path><rect x="29.8" y="169.36" width="1.700" height="3.800" fill="#d9534a"></rect><rect x="31.8" y="168.36" width="1.400" height="4.800" fill="#e8a23a"></rect><rect x="33.4" y="170.56" width="1.300" height="2.600" fill="#5cab45"></rect><path d="M29.1 173.86 h6" stroke="#8fb0dc" stroke-width=".7"></path>
<rect x="40.9" y="181.03" width="6.400" height="2.700" rx="1.200" fill="#7fa6da"></rect><rect x="41.9" y="181.53" width="4.400" height="1" rx=".5" fill="#c3d8f2"></rect>
<rect x="40.1" y="190.99999999999997" width="8" height="6.600" fill="#e6eff9" stroke="#8fa9d0" stroke-width=".7"></rect><path d="M42.800000000000004 190.99999999999997 v6.600 M45.5 190.99999999999997 v6.600" stroke="#8fa9d0" stroke-width=".6"></path><path d="M39.9 197.7 h8.400" stroke="#3f5f9a" stroke-width=".8"></path>
<rect x="39.9" y="202.17" width="8.400" height="8" fill="#eef1f5" stroke="#a9b9d0" stroke-width=".7"></rect><rect x="39.9" y="202.17" width="8.400" height="1.900" fill="#5f86c4"></rect><rect x="41.1" y="205.36999999999998" width="3" height="3.600" fill="#c3c9d3"></rect><rect x="44.7" y="205.36999999999998" width="2.600" height="1.500" fill="#d9dde4"></rect>
<circle cx="32.2" cy="218.04" r="2.800" fill="#fbfbfb" stroke="#b4b4b4" stroke-width=".8"></circle><path d="M30.800000000000004 218.04 h2.800" stroke="#8a8a8a" stroke-width=".8"></path>
<circle cx="44.1" cy="218.04" r="4" fill="#fdf8e3" stroke="#f0c232" stroke-width="1.400"></circle><path d="M42.800000000000004 215.84 l3.200 2.200 l-3.200 2.200 z" fill="#fae9a6" stroke="#e6b83a" stroke-width=".5"></path>
<circle cx="56" cy="229.91" r="4" fill="#fdf8e3" stroke="#f0c232" stroke-width="1.400"></circle><path d="M54.7 227.71 l3.200 2.200 l-3.200 2.200 z" fill="#fae9a6" stroke="#e6b83a" stroke-width=".5"></path>
<circle cx="32.2" cy="241.77999999999997" r="2.800" fill="#fbfbfb" stroke="#b4b4b4" stroke-width=".8"></circle><path d="M30.800000000000004 241.77999999999997 h2.800" stroke="#8a8a8a" stroke-width=".8"></path>
<rect x="39.9" y="237.77999999999997" width="8.400" height="8" fill="#f4f7fb" stroke="#a4b8d8" stroke-width=".7"></rect><rect x="39.9" y="237.77999999999997" width="8.400" height="1.600" fill="#7f9fd0"></rect><rect x="41.300000000000004" y="240.57999999999998" width="5.600" height="4" fill="#fbe9e3"></rect><path d="M42.5 241.17999999999998 l3 2.800 M45.5 241.17999999999998 l-3 2.800" stroke="#e8705a" stroke-width=".9"></path>
<rect x="51.8" y="249.64999999999998" width="8.400" height="8" fill="#f4f7fb" stroke="#a4b8d8" stroke-width=".7"></rect><rect x="51.8" y="249.64999999999998" width="8.400" height="1.600" fill="#7f9fd0"></rect><rect x="53.2" y="252.45" width="5.600" height="4" fill="#fbe9e3"></rect><path d="M54.4 253.04999999999998 l3 2.800 M57.4 253.04999999999998 l-3 2.800" stroke="#e8705a" stroke-width=".9"></path>
<circle cx="20.1" cy="265.52" r="2.800" fill="#fbfbfb" stroke="#b4b4b4" stroke-width=".8"></circle><path d="M18.700000000000003 265.52 h2.800 M20.1 264.12 v2.800" stroke="#8a8a8a" stroke-width=".8"></path>
<path d="M28.400000000000002 261.21999999999997 h5.200 l2.200 2.200 v6.400 h-7.400 z" fill="#f7f9fc" stroke="#a4bedf" stroke-width=".7"></path><rect x="29.8" y="264.32" width="1.700" height="3.800" fill="#d9534a"></rect><rect x="31.8" y="263.32" width="1.400" height="4.800" fill="#e8a23a"></rect><rect x="33.4" y="265.52" width="1.300" height="2.600" fill="#5cab45"></rect><path d="M29.1 268.82 h6" stroke="#8fb0dc" stroke-width=".7"></path>
<circle cx="20.1" cy="277.39" r="2.800" fill="#fbfbfb" stroke="#b4b4b4" stroke-width=".8"></circle><path d="M18.700000000000003 277.39 h2.800 M20.1 275.99 v2.800" stroke="#8a8a8a" stroke-width=".8"></path>
<path d="M28.400000000000002 273.09 h5.200 l2.200 2.200 v6.400 h-7.400 z" fill="#f7f9fc" stroke="#a4bedf" stroke-width=".7"></path><rect x="29.8" y="276.19" width="1.700" height="3.800" fill="#d9534a"></rect><rect x="31.8" y="275.19" width="1.400" height="4.800" fill="#e8a23a"></rect><rect x="33.4" y="277.39" width="1.300" height="2.600" fill="#5cab45"></rect><path d="M29.1 280.69 h6" stroke="#8fb0dc" stroke-width=".7"></path>
<circle cx="20.1" cy="289.26" r="2.800" fill="#fbfbfb" stroke="#b4b4b4" stroke-width=".8"></circle><path d="M18.700000000000003 289.26 h2.800 M20.1 287.86 v2.800" stroke="#8a8a8a" stroke-width=".8"></path>
<path d="M28.400000000000002 284.96 h5.200 l2.200 2.200 v6.400 h-7.400 z" fill="#f7f9fc" stroke="#a4bedf" stroke-width=".7"></path><rect x="29.8" y="288.06" width="1.700" height="3.800" fill="#d9534a"></rect><rect x="31.8" y="287.06" width="1.400" height="4.800" fill="#e8a23a"></rect><rect x="33.4" y="289.26" width="1.300" height="2.600" fill="#5cab45"></rect><path d="M29.1 292.56 h6" stroke="#8fb0dc" stroke-width=".7"></path>
<circle cx="8" cy="301.13" r="2.800" fill="#fbfbfb" stroke="#b4b4b4" stroke-width=".8"></circle><path d="M6.6 301.13 h2.800 M8 299.73 v2.800" stroke="#8a8a8a" stroke-width=".8"></path>
<rect x="16.2" y="300.33" width="5.500" height="4.800" fill="#5f8fd6" stroke="#2f5fa8" stroke-width=".7"></rect><rect x="17.599999999999998" y="301.73" width="2.200" height="2" fill="#e9f0fb"></rect><path d="M20.2 300.13 l2.600 -3.400 l1.800 1.300 l-2.400 3.300 z" fill="#f2c83a" stroke="#c9972a" stroke-width=".4"></path>
<circle cx="8" cy="313.0" r="2.800" fill="#fbfbfb" stroke="#b4b4b4" stroke-width=".8"></circle><path d="M6.6 313.0 h2.800 M8 311.6 v2.800" stroke="#8a8a8a" stroke-width=".8"></path>
<rect x="16.2" y="309.0" width="8" height="8" fill="#eef2f8" stroke="#a4b8d8" stroke-width=".7"></rect><rect x="16.2" y="309.0" width="8" height="1.600" fill="#5f86c4"></rect><path d="M17.2 312.2 h6 M17.2 313.8 h6 M17.2 315.4 h6" stroke="#b9c3d3" stroke-width=".7"></path>
<path d="M16.4 321.37 h4.600 M18.7 321.37 v5" stroke="#3f74c6" stroke-width="1.100" fill="none"></path><path d="M20.7 324.07 h3.500 M22.4 324.07 v4.800" stroke="#3f74c6" stroke-width="1" fill="none"></path>
<path d="M15.899999999999999 338.04 l4.300 -2.200 l4.300 2.200 l-4.300 2.200 z" fill="#3f8f3a"></path><path d="M15.899999999999999 335.44 l4.300 -2.200 l4.300 2.200 l-4.300 2.200 z" fill="#5cb04a"></path>
<circle cx="8" cy="348.61" r="2.800" fill="#fbfbfb" stroke="#b4b4b4" stroke-width=".8"></circle><path d="M6.6 348.61 h2.800 M8 347.21000000000004 v2.800" stroke="#8a8a8a" stroke-width=".8"></path>
<rect x="16.4" y="344.31" width="7.600" height="8.600" fill="#fbfcfd" stroke="#7f99b8" stroke-width=".7"></rect><path d="M18.9 344.31 v8.600 M21.5 344.31 v8.600 M16.4 346.31 h7.600" stroke="#8fa6c4" stroke-width=".6"></path><rect x="16.8" y="344.71000000000004" width="6.800" height="1.200" fill="#f2d25a"></rect><rect x="19.2" y="347.81" width="2" height="3.600" fill="#7fc46f"></rect>
<circle cx="8" cy="360.48" r="2.800" fill="#fbfbfb" stroke="#b4b4b4" stroke-width=".8"></circle><path d="M6.6 360.48 h2.800 M8 359.08000000000004 v2.800" stroke="#8a8a8a" stroke-width=".8"></path>
<rect x="16.4" y="356.18" width="7.600" height="8.600" fill="#f5f8fc" stroke="#a4bedf" stroke-width=".8"></rect><rect x="18.2" y="358.68" width="4.200" height="4.200" rx=".6" fill="#f2b93a" stroke="#c98f2a" stroke-width=".4"></rect>
<rect x="16.4" y="368.05" width="7.600" height="8.600" fill="#f5f8fc" stroke="#a4bedf" stroke-width=".8"></rect><path d="M17.9 370.05 h3 M19.4 370.05 v3 M20.2 372.35 h2.600 M21.5 372.35 v3" stroke="#3f74c6" stroke-width=".9"></path>
<rect x="16.4" y="379.92" width="7.600" height="8.600" fill="#f5f8fc" stroke="#a4bedf" stroke-width=".8"></rect><path d="M17.599999999999998 384.52000000000004 l2.600 -1.400 l2.600 1.400 l-2.600 1.400 z" fill="#4fa43c"></path>
<ellipse cx="20.2" cy="392.88999999999993" rx="2.200" ry="1.300" fill="#3f74c6"></ellipse><path d="M18.2 393.5899999999999 l2 2.500 l2 -2.500 z" fill="#5f8fd6"></path><path d="M17.7 398.0899999999999 l2.500 -3 l2.500 3 z" fill="#f3d98a"></path><path d="M15.7 398.0899999999999 h5 l-2.500 2.300 z" fill="#2f4f8a"></path><path d="M22.7 396.5899999999999 l2.200 2.200 l-2.200 2.200 l-2.200 -2.200 z" fill="#e0533f"></path>
<path d="M16.599999999999998 403.6599999999999 h5 l2.200 2.200 v6.400 h-7.200 z" fill="#eef3fa" stroke="#a4bedf" stroke-width=".7"></path><rect x="19.9" y="406.4599999999999" width="1.600" height="5" fill="#eaa090"></rect><rect x="17.9" y="407.4599999999999" width="1.300" height="4" fill="#c9d9ee"></rect>
<rect x="4.300" y="566" width="6" height="7.500" fill="#f4f7fb" stroke="#9ab0cf" stroke-width=".7"></rect><rect x="2.800" y="564.500" width="3.800" height="3.800" fill="#e8b93a"></rect>
<path d="M794 582.500 h3.200 l-1.600 1.800 z" fill="#333"></path>
<rect x="232" y="46" width="6.500" height="7.500" fill="#f4f7fb" stroke="#9ab0cf" stroke-width=".7"></rect><rect x="230.500" y="44.500" width="3.800" height="3.800" fill="#e8b93a"></rect><path d="M234 47.500 l2 2" stroke="#d98a3a" stroke-width=".8"></path>
<rect x="765" y="51" width="4.500" height="1.300" fill="#222"></rect>
<rect x="777" y="47.500" width="4.500" height="4" fill="none" stroke="#333" stroke-width=".8"></rect><path d="M778.500 47.300 v-1.300 h4.500 v4 h-1.300" fill="none" stroke="#333" stroke-width=".8"></path>
<path d="M790 46.300 l5 5.400 M795 46.300 l-5 5.400" stroke="#222" stroke-width="1.100"></path>
<circle cx="241.5" cy="79.2" r="4.3" fill="#69b955" stroke="#b3dba8" stroke-width="1.200"></circle><path d="M239.3 79.2 h4.400 M241.5 77.0 v4.400" stroke="#fff" stroke-width="1.300"></path>
<path d="M252.5 75.2 h4 l2 2 v6 h-6 z" fill="#eef3fa" stroke="#9ab3d3" stroke-width=".8"></path><circle cx="258" cy="81.5" r="2.600" fill="#63b04c" stroke="#b8dcae" stroke-width=".6"></circle><path d="M256.5 81.5 h3 M258 80.0 v3" stroke="#fff" stroke-width=".9"></path>
<path d="M267.1 76.3 l5.8 5.8 M272.9 76.3 l-5.8 5.8" stroke="#e8705a" stroke-width="1.9" stroke-linecap="round"></path>
<path d="M284 75.4 l4 4 h-2.200 v3.400 h-3.600 v-3.400 h-2.200 z" fill="#9fb4cc" stroke="#8ca3bd" stroke-width=".5"></path>
<path d="M299 83.0 l4 -4 h-2.200 v-3.400 h-3.600 v3.400 h-2.200 z" fill="#4d8bdb" stroke="#2e6cc0" stroke-width=".5"></path>
<rect x="389.4" y="75.7" width="6" height="2" rx=".5" fill="#cfe0f5" stroke="#3f74c6" stroke-width=".7"></rect><rect x="389.4" y="78.5" width="6" height="2" rx=".5" fill="#cfe0f5" stroke="#3f74c6" stroke-width=".7"></rect><rect x="389.4" y="81.3" width="6" height="2" rx=".5" fill="#cfe0f5" stroke="#3f74c6" stroke-width=".7"></rect><path d="M386.59999999999997 76.10000000000001 h4.400 M388.79999999999995 73.9 v4.400" stroke="#3fa33a" stroke-width="1.500"></path>
<path d="M398.300 78.200 h3.400 l-1.700 1.900 z" fill="#333"></path>
<path d="M407.5 82.10000000000001 l1 -2.600 l4.300 -4.300 l1.600 1.600 l-4.300 4.300 z" fill="#a9c2a0"></path><path d="M407.5 82.10000000000001 l.5 -1.400 l.9 .9 z" fill="#333"></path>
<path d="M422.3 76.0 l5.8 5.8 M428.09999999999997 76.0 l-5.8 5.8" stroke="#d9c8bc" stroke-width="1.7" stroke-linecap="round"></path>
<rect x="434.800" y="74.500" width="7" height="7.500" fill="#dfe9f6" stroke="#a9c0e0" stroke-width=".7"></rect><path d="M438.500 77 l5 5.300" stroke="#4a4a5a" stroke-width="1.200"></path><path d="M441 75.300 l1 1 M442.600 77.300 l.8 -.8 M439.800 75.800 l-.6 -.8" stroke="#e0533f" stroke-width=".7"></path>
<path d="M453.9 75.10000000000001 l4 4 h-2.200 v3.400 h-3.600 v-3.400 h-2.200 z" fill="#a9bcd2" stroke="#9db1c9" stroke-width=".5"></path>
<path d="M468 82.7 l4 -4 h-2.200 v-3.400 h-3.600 v3.400 h-2.200 z" fill="#a9bcd2" stroke="#9db1c9" stroke-width=".5"></path>
<rect x="476.800" y="74" width="1" height="10" fill="#e0dcc8"></rect><rect x="523.300" y="74" width="1" height="10" fill="#e0dcc8"></rect>
<path d="M481.500 74.500 h5 l1.500 1.500 v6 h-6.500 z" fill="#e3edf8" stroke="#a9c0e0" stroke-width=".7"></path><path d="M484 76.500 q2.500 -1 3.500 1.800" stroke="#1f3f6a" stroke-width=".9" fill="none"></path><path d="M483.300 76.200 l1.800 -1 l0 2 z" fill="#1f3f6a"></path><path d="M485.500 83.800 h5.500 l-2.750 -3.600 z" fill="#f2c83a"></path>
<rect x="495.500" y="75.500" width="4" height="4.500" fill="#e3edf8" stroke="#a9c0e0" stroke-width=".7"></rect><circle cx="501.500" cy="77.800" r="2.300" fill="#f7e6a6" stroke="#e0c060" stroke-width=".6"></circle><path d="M502.300 77 v-2.800 m-1.200 1 l1.200 -1.400 l1.200 1.400" stroke="#1f2f5a" stroke-width=".9" fill="none"></path><path d="M498.500 83.800 h6 l-3 -3.300 z" fill="#f2c83a"></path>
<rect x="509.700" y="75.500" width="4" height="4.500" fill="#e3edf8" stroke="#a9c0e0" stroke-width=".7"></rect><rect x="514.300" y="75" width="5" height="5.500" rx="1" fill="#cfe0f5" stroke="#8fb0dc" stroke-width=".7"></rect><circle cx="516.800" cy="77.800" r="1.600" fill="#8fb0dc"></circle><path d="M511.500 83.800 h6 l-3 -3.300 z" fill="#f2c83a"></path>
<rect x="527.2" y="74.500" width="2.600" height="6.500" fill="#e3edf8" stroke="#a9c0e0" stroke-width=".6"></rect><rect x="530.4" y="74.500" width="2.600" height="6.500" fill="#e3edf8" stroke="#a9c0e0" stroke-width=".6"></rect><circle cx="534.8" cy="77" r="2.300" fill="#c9ccd3" stroke="#8f939c" stroke-width=".8"></circle><rect x="532.8" y="80.300" width="4.200" height="1.800" fill="#5f86c0"></rect>
<path d="M526.8 81.800 h4.400 M529 79.600 v4.400" stroke="#3fa33a" stroke-width="1.400"></path>
<rect x="541.2" y="74.500" width="2.600" height="6.500" fill="#e3edf8" stroke="#a9c0e0" stroke-width=".6"></rect><rect x="544.4" y="74.500" width="2.600" height="6.500" fill="#e3edf8" stroke="#a9c0e0" stroke-width=".6"></rect><circle cx="548.8" cy="77" r="2.300" fill="#c9ccd3" stroke="#8f939c" stroke-width=".8"></circle><rect x="546.8" y="80.300" width="4.200" height="1.800" fill="#5f86c0"></rect>
<circle cx="543.7" cy="80.500" r="1.700" fill="#f4f0e6" stroke="#c9a080" stroke-width=".7"></circle><path d="M542.5 81.800 l-1.500 1.600" stroke="#d98a6a" stroke-width="1"></path>
<circle cx="392.5" cy="94.9" r="2.800" fill="#fbfbfb" stroke="#b4b4b4" stroke-width=".8"></circle><path d="M391.1 94.9 h2.800" stroke="#8a8a8a" stroke-width=".8"></path>
<path d="M399.800 90.4 h4.500 l2 2 v6.500 h-6.500 z" fill="#dce8f6" stroke="#a4bedf" stroke-width=".7"></path><path d="M402 91.9 h4.500 l2 2 v6.300 h-6.500 z" fill="#eaf1fa" stroke="#9fbbe3" stroke-width=".7"></path><rect x="403" y="95.4" width="4.300" height="3.500" fill="#b8d0ee"></rect>
<circle cx="404.4" cy="106.77000000000001" r="2.800" fill="#fbfbfb" stroke="#b4b4b4" stroke-width=".8"></circle><path d="M403.0 106.77000000000001 h2.800" stroke="#8a8a8a" stroke-width=".8"></path>
<rect x="411.79999999999995" y="103.17000000000002" width="7.200" height="7.200" rx="1.200" fill="#fff" stroke="#c3b48a" stroke-width=".9"></rect><path d="M413.4 106.77000000000001 l1.500 1.700 l2.600 -3.400" fill="none" stroke="#222" stroke-width="1.100"></path>
<rect x="421.2" y="103.47000000000001" width="8" height="6.600" fill="#e6eff9" stroke="#8fa9d0" stroke-width=".7"></rect><path d="M423.9 103.47000000000001 v6.600 M426.59999999999997 103.47000000000001 v6.600" stroke="#8fa9d0" stroke-width=".6"></path><path d="M421.0 110.17000000000002 h8.400" stroke="#3f5f9a" stroke-width=".8"></path>
<circle cx="416.5" cy="118.64" r="2.800" fill="#fbfbfb" stroke="#b4b4b4" stroke-width=".8"></circle><path d="M415.1 118.64 h2.800" stroke="#8a8a8a" stroke-width=".8"></path>
<rect x="435.2" y="126.91" width="7.200" height="7.200" rx="1.200" fill="#fff" stroke="#c3b48a" stroke-width=".9"></rect><path d="M436.8 130.51 l1.500 1.700 l2.600 -3.400" fill="none" stroke="#222" stroke-width="1.100"></path>
<rect x="445.7" y="128.31" width="6.600" height="2.600" fill="#dfe8f5" stroke="#6f8fc0" stroke-width=".6"></rect><path d="M447.9 128.31 v2.600 M450.1 128.31 v2.600" stroke="#6f8fc0" stroke-width=".5"></path>
<circle cx="416.5" cy="142.38" r="2.800" fill="#fbfbfb" stroke="#b4b4b4" stroke-width=".8"></circle><path d="M415.1 142.38 h2.800" stroke="#8a8a8a" stroke-width=".8"></path>
<rect x="435.2" y="150.65" width="7.200" height="7.200" rx="1.200" fill="#fff" stroke="#c3b48a" stroke-width=".9"></rect><path d="M436.8 154.25 l1.500 1.700 l2.600 -3.400" fill="none" stroke="#222" stroke-width="1.100"></path>
<rect x="445.7" y="152.05" width="6.600" height="2.600" fill="#dfe8f5" stroke="#6f8fc0" stroke-width=".6"></rect><path d="M447.9 152.05 v2.600 M450.1 152.05 v2.600" stroke="#6f8fc0" stroke-width=".5"></path>
<rect x="721.600" y="91.500" width="2.600" height="7.500" fill="#dbe7f6" stroke="#9fbbe3" stroke-width=".6"></rect><rect x="725" y="90" width="6.500" height="2" rx=".6" fill="#dbe7f6" stroke="#9fbbe3" stroke-width=".6"></rect><rect x="725" y="93" width="6.500" height="2" rx=".6" fill="#dbe7f6" stroke="#9fbbe3" stroke-width=".6"></rect><rect x="725" y="96" width="6.500" height="2" rx=".6" fill="#dbe7f6" stroke="#9fbbe3" stroke-width=".6"></rect><path d="M721.500 99.500 h10" stroke="#8fb0dc" stroke-width=".7"></path>
<rect x="751.6" y="91.3" width="2.700" height="7.500" fill="#dbe7f6" stroke="#9fbbe3" stroke-width=".6"></rect><rect x="754.9000000000001" y="91.3" width="2.700" height="7.500" fill="#dbe7f6" stroke="#9fbbe3" stroke-width=".6"></rect><rect x="758.2" y="91.3" width="2.700" height="7.500" fill="#dbe7f6" stroke="#9fbbe3" stroke-width=".6"></rect><path d="M751.4000000000001 99.1 h9.600" stroke="#8fb0dc" stroke-width=".7"></path><path d="M756.200 90 v8.500" stroke="#3f74c6" stroke-width=".8"></path><path d="M755 96.500 l1.200 1.500 l1.200 -1.500 z" fill="#3f74c6"></path>
<rect x="766.4" y="91.3" width="2.700" height="7.500" fill="#dbe7f6" stroke="#9fbbe3" stroke-width=".6"></rect><rect x="769.7" y="91.3" width="2.700" height="7.500" fill="#dbe7f6" stroke="#9fbbe3" stroke-width=".6"></rect><rect x="773" y="91.3" width="2.700" height="7.500" fill="#dbe7f6" stroke="#9fbbe3" stroke-width=".6"></rect><path d="M766.2 99.1 h9.600" stroke="#8fb0dc" stroke-width=".7"></path><path d="M768.300 95 l4.600 -5" stroke="#222" stroke-width="1.300"></path><circle cx="767.800" cy="95.600" r="1.400" fill="#e0952a"></circle>
<rect x="781.4" y="91.3" width="2.700" height="7.500" fill="#dbe7f6" stroke="#9fbbe3" stroke-width=".6"></rect><rect x="784.7" y="91.3" width="2.700" height="7.500" fill="#dbe7f6" stroke="#9fbbe3" stroke-width=".6"></rect><rect x="788" y="91.3" width="2.700" height="7.500" fill="#dbe7f6" stroke="#9fbbe3" stroke-width=".6"></rect><path d="M781.2 99.1 h9.600" stroke="#8fb0dc" stroke-width=".7"></path><circle cx="788.600" cy="91.800" r="2" fill="#d9d9d9" stroke="#9a9a9a" stroke-width=".9"></circle>
<circle cx="397" cy="340.9" r="2.800" fill="#fbfbfb" stroke="#b4b4b4" stroke-width=".8"></circle><path d="M395.6 340.9 h2.800" stroke="#8a8a8a" stroke-width=".8"></path>
<rect x="405.8" y="339.5" width="6.400" height="2.700" rx="1.200" fill="#7fa6da"></rect><rect x="406.8" y="340.0" width="4.400" height="1" rx=".5" fill="#c3d8f2"></rect>
<rect x="418.1" y="351.35" width="6.400" height="2.700" rx="1.200" fill="#7fa6da"></rect><rect x="419.1" y="351.85" width="4.400" height="1" rx=".5" fill="#c3d8f2"></rect>
<rect x="418.1" y="363.2" width="6.400" height="2.700" rx="1.200" fill="#7fa6da"></rect><rect x="419.1" y="363.7" width="4.400" height="1" rx=".5" fill="#c3d8f2"></rect>
<rect x="418.1" y="375.05" width="6.400" height="2.700" rx="1.200" fill="#7fa6da"></rect><rect x="419.1" y="375.55" width="4.400" height="1" rx=".5" fill="#c3d8f2"></rect>
<rect x="418.1" y="386.9" width="6.400" height="2.700" rx="1.200" fill="#7fa6da"></rect><rect x="419.1" y="387.4" width="4.400" height="1" rx=".5" fill="#c3d8f2"></rect>
<rect x="418.1" y="398.75" width="6.400" height="2.700" rx="1.200" fill="#7fa6da"></rect><rect x="419.1" y="399.25" width="4.400" height="1" rx=".5" fill="#c3d8f2"></rect>
<rect x="418.1" y="410.6" width="6.400" height="2.700" rx="1.200" fill="#7fa6da"></rect><rect x="419.1" y="411.1" width="4.400" height="1" rx=".5" fill="#c3d8f2"></rect>
<circle cx="397" cy="423.84999999999997" r="2.800" fill="#fbfbfb" stroke="#b4b4b4" stroke-width=".8"></circle><path d="M395.6 423.84999999999997 h2.800 M397 422.45 v2.800" stroke="#8a8a8a" stroke-width=".8"></path>
<rect x="405.8" y="422.45" width="6.400" height="2.700" rx="1.200" fill="#7fa6da"></rect><rect x="406.8" y="422.95" width="4.400" height="1" rx=".5" fill="#c3d8f2"></rect>
<circle cx="397" cy="435.7" r="2.800" fill="#fbfbfb" stroke="#b4b4b4" stroke-width=".8"></circle><path d="M395.6 435.7 h2.800" stroke="#8a8a8a" stroke-width=".8"></path>
<path d="M407.5 438.9 q-.8 -3.200 1.800 -6.400 l1.600 .8 q.3 3.600 -1.400 6 z" fill="#4fae3a" stroke="#2f8a25" stroke-width=".4"></path>
<path d="M419.8 450.74999999999994 q-.8 -3.200 1.800 -6.400 l1.600 .8 q.3 3.600 -1.400 6 z" fill="#4fae3a" stroke="#2f8a25" stroke-width=".4"></path>
<path d="M419.8 462.59999999999997 q-.8 -3.200 1.800 -6.400 l1.600 .8 q.3 3.600 -1.400 6 z" fill="#4fae3a" stroke="#2f8a25" stroke-width=".4"></path>
<circle cx="397" cy="471.25" r="2.800" fill="#fbfbfb" stroke="#b4b4b4" stroke-width=".8"></circle><path d="M395.6 471.25 h2.800" stroke="#8a8a8a" stroke-width=".8"></path>
<path d="M405.9 468.65 h2.400 l.8 .9 h3 v4.300 h-6.200 z" fill="#f8df8a" stroke="#e6b848" stroke-width=".7"></path>
<rect x="418.1" y="481.7" width="6.400" height="2.700" rx="1.200" fill="#7fa6da"></rect><rect x="419.1" y="482.2" width="4.400" height="1" rx=".5" fill="#c3d8f2"></rect>
<rect x="418.1" y="493.54999999999995" width="6.400" height="2.700" rx="1.200" fill="#7fa6da"></rect><rect x="419.1" y="494.04999999999995" width="4.400" height="1" rx=".5" fill="#c3d8f2"></rect>
<rect x="418.1" y="505.4" width="6.400" height="2.700" rx="1.200" fill="#7fa6da"></rect><rect x="419.1" y="505.9" width="4.400" height="1" rx=".5" fill="#c3d8f2"></rect>
<rect x="418.1" y="517.25" width="6.400" height="2.700" rx="1.200" fill="#7fa6da"></rect><rect x="419.1" y="517.75" width="4.400" height="1" rx=".5" fill="#c3d8f2"></rect>
<circle cx="397" cy="530.5" r="2.800" fill="#fbfbfb" stroke="#b4b4b4" stroke-width=".8"></circle><path d="M395.6 530.5 h2.800 M397 529.1 v2.800" stroke="#8a8a8a" stroke-width=".8"></path>
<path d="M405.9 527.9 h2.400 l.8 .9 h3 v4.300 h-6.200 z" fill="#f8df8a" stroke="#e6b848" stroke-width=".7"></path>
<path d="M397.500 545.300 v4 l-3 -2 z" fill="#b5b09a"></path><path d="M508 545.300 v4 l3 -2 z" fill="#555"></path><path d="M446 546.500 v2" stroke="#cfc9b0" stroke-width=".7"></path>
<circle cx="540.3" cy="340.9" r="2.800" fill="#fbfbfb" stroke="#b4b4b4" stroke-width=".8"></circle><path d="M538.9 340.9 h2.800" stroke="#8a8a8a" stroke-width=".8"></path>
<rect x="522.4" y="349.15" width="7.200" height="7.200" rx="1.200" fill="#fff" stroke="#c3b48a" stroke-width=".9"></rect><path d="M524 352.75 l1.500 1.700 l2.600 -3.400" fill="none" stroke="#222" stroke-width="1.100"></path>
<path d="M563.3 355.95 q-.8 -3.200 1.800 -6.400 l1.600 .8 q.3 3.600 -1.400 6 z" fill="#4fae3a" stroke="#2f8a25" stroke-width=".4"></path>
<rect x="522.4" y="360.99999999999994" width="7.200" height="7.200" rx="1.200" fill="#fff" stroke="#c3b48a" stroke-width=".9"></rect><path d="M524 364.59999999999997 l1.500 1.700 l2.600 -3.400" fill="none" stroke="#222" stroke-width="1.100"></path>
<rect x="561.5999999999999" y="363.2" width="6.400" height="2.700" rx="1.200" fill="#7fa6da"></rect><rect x="562.5999999999999" y="363.7" width="4.400" height="1" rx=".5" fill="#c3d8f2"></rect>
<rect x="522.4" y="372.84999999999997" width="7.200" height="7.200" rx="1.200" fill="#fff" stroke="#c3b48a" stroke-width=".9"></rect><path d="M524 376.45 l1.500 1.700 l2.600 -3.400" fill="none" stroke="#222" stroke-width="1.100"></path>
<rect x="561.5999999999999" y="375.05" width="6.400" height="2.700" rx="1.200" fill="#7fa6da"></rect><rect x="562.5999999999999" y="375.55" width="4.400" height="1" rx=".5" fill="#c3d8f2"></rect>
<rect x="783" y="325" width="6" height="2" rx=".5" fill="#cfe0f5" stroke="#3f74c6" stroke-width=".7"></rect><rect x="783" y="327.8" width="6" height="2" rx=".5" fill="#cfe0f5" stroke="#3f74c6" stroke-width=".7"></rect><rect x="783" y="330.6" width="6" height="2" rx=".5" fill="#cfe0f5" stroke="#3f74c6" stroke-width=".7"></rect><path d="M780.2 325.4 h4.400 M782.4 323.2 v4.400" stroke="#3fa33a" stroke-width="1.500"></path>
<path d="M785 336 h2.600 l-1.300 1.600 z" fill="#333"></path>
<path d="M782.4 345.4 l5.2 5.2 M787.6 345.4 l-5.2 5.2" stroke="#cfc3b6" stroke-width="1.5" stroke-linecap="round"></path>
<path d="M785 358.2 l4 4 h-2.200 v3.400 h-3.600 v-3.400 h-2.200 z" fill="#a9bcd2" stroke="#95aac3" stroke-width=".5"></path>
<path d="M785 379.3 l4 -4 h-2.200 v-3.400 h-3.600 v3.400 h-2.200 z" fill="#a9bcd2" stroke="#95aac3" stroke-width=".5"></path>
</svg>
</div>
</body></html>
